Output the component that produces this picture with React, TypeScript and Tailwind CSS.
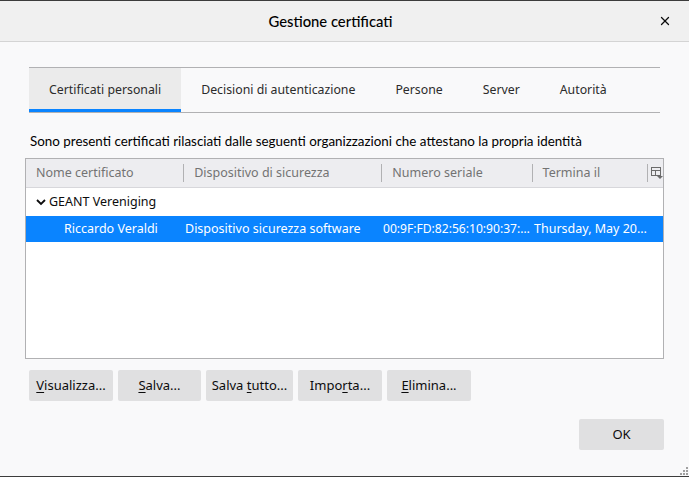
import { X } from 'lucide-react';

const tabs = [
  { label: 'Certificati personali', active: true },
  { label: 'Decisioni di autenticazione' },
  { label: 'Persone' },
  { label: 'Server' },
  { label: 'Autorità' }
];

const columns = [
  { label: 'Nome certificato', w: 'w-[158px]' },
  { label: 'Dispositivo di sicurezza', w: 'w-[199px]' },
  { label: 'Numero seriale', w: 'w-[151px]' },
  { label: 'Termina il', w: 'w-[116px]' }
];

function Btn({ pre = '', u, post, w }: { pre?: string; u: string; post: string; w: string }) {
  return (
    <button
      type="button"
      className={`h-[31px] rounded-[2px] bg-[#e0e0e1] text-center text-[13px] text-[#0c0c0d] ${w}`}
    >
      <span className="whitespace-pre">
        {pre}
        <span className="underline underline-offset-2">{u}</span>
        {post}
      </span>
    </button>
  );
}

function ColumnPicker() {
  return (
    <svg width="12" height="12" viewBox="0 0 12 12" className="text-[#6b6b6b]">
      <rect x="0.5" y="0.5" width="9" height="8" fill="none" stroke="currentColor" />
      <line x1="0.5" y1="3.5" x2="9.5" y2="3.5" stroke="currentColor" />
      <line x1="4.5" y1="3.5" x2="4.5" y2="8.5" stroke="currentColor" />
      <path d="M6 9h6l-3 3z" fill="currentColor" />
    </svg>
  );
}

function Grip() {
  return (
    <svg width="8" height="8" viewBox="0 0 8 8" className="absolute bottom-[1px] right-[1px] text-[#a0a0a0]">
      <rect x="6" y="0" width="2" height="2" fill="currentColor" />
      <rect x="3" y="3" width="2" height="2" fill="currentColor" />
      <rect x="6" y="3" width="2" height="2" fill="currentColor" />
      <rect x="0" y="6" width="2" height="2" fill="currentColor" />
      <rect x="3" y="6" width="2" height="2" fill="currentColor" />
      <rect x="6" y="6" width="2" height="2" fill="currentColor" />
    </svg>
  );
}

export default function App() {
  return (
    <div
      className="relative flex h-[477px] w-[689px] flex-col overflow-hidden border-t border-b border-[#3c3c3c] bg-[#f9f9fa] text-[#0c0c0d]"
      style={{ fontFamily: '"Noto Sans", "Open Sans", sans-serif' }}
    >
      <header className="relative flex h-[41px] shrink-0 items-center justify-center border-b border-[#d4d4d4] bg-[#f0f0f0] pr-[28px]">
        <span className="text-[14.8px] font-medium text-black" style={{ fontFamily: 'Lato, sans-serif' }}>
          Gestione certificati
        </span>
        <X className="absolute right-[17px] top-[13px] h-[14px] w-[14px]" strokeWidth={2.2} />
      </header>

      <div className="flex flex-1 flex-col px-[25px]">
        <nav className="mx-[4px] mt-[25px] flex h-[46px] border-y border-[#b1b1b3] text-[12.3px] text-[#2b2b2b]">
          {tabs.map((t) => (
            <div
              key={t.label}
              className={
                t.active
                  ? 'flex items-center border-b-[3px] border-[#0a84ff] bg-[#ebebeb] px-[20px] pt-[4px]'
                  : 'flex items-center px-[20px] pt-[1px]'
              }
            >
              {t.label}
            </div>
          ))}
        </nav>

        <p className="mt-[18px] ml-[5px] text-[13.4px] text-black" style={{ fontFamily: 'Lato, sans-serif' }}>
          Sono presenti certificati rilasciati dalle seguenti organizzazioni che attestano la propria identità
        </p>

        <div className="mt-[7px] flex h-[201px] flex-col border border-[#b1b1b3] bg-white text-[12.5px]">
          <div className="flex h-[29px] shrink-0 items-center border-b border-[#d7d7db] bg-[#ededf0] text-[#737373]">
            {columns.map((c, i) => (
              <div key={c.label} className={`flex h-full items-center ${c.w}`}>
                {i > 0 && <span className="mr-[10px] h-[18px] w-px bg-[#b1b1b3]" />}
                <span className={i === 0 ? 'pl-[10px]' : ''}>{c.label}</span>
              </div>
            ))}
            <span className="h-[18px] w-px bg-[#b1b1b3]" />
            <span className="ml-[3px]">
              <ColumnPicker />
            </span>
          </div>

          <div className="flex h-[28px] items-center pl-[9px] text-[#0c0c0d]">
            <svg width="12" height="12" viewBox="0 0 12 12" className="mr-[2px]">
              <path d="M2 4l4 4 4-4" fill="none" stroke="currentColor" strokeWidth="1.8" />
            </svg>
            GEANT Vereniging
          </div>
          <div className="flex h-[26px] items-center whitespace-nowrap bg-[#0a84ff] text-white">
            <span className="w-[159px] pl-[38px]">Riccardo Veraldi</span>
            <span className="w-[198px] overflow-hidden">Dispositivo sicurezza software</span>
            <span className="w-[151px] overflow-hidden text-[12.1px]">00:9F:FD:82:56:10:90:37:…</span>
            <span>Thursday, May 20…</span>
          </div>
        </div>

        <div className="mt-[11px] ml-[4px] flex gap-[5px]">
          <Btn w="w-[84px]" u="V" post="isualizza..." />
          <Btn w="w-[83px]" u="S" post="alva..." />
          <Btn w="w-[87px]" pre="Salva " u="t" post="utto..." />
          <Btn w="w-[84px]" pre="Impo" u="r" post="ta..." />
          <Btn w="w-[84px]" u="E" post="limina..." />
        </div>

        <div className="mt-[18px] flex justify-end">
          <button type="button" className="h-[31px] w-[85px] rounded-[2px] bg-[#e0e0e1] text-[13px]">
            OK
          </button>
        </div>
      </div>
      <Grip />
    </div>
  );
}
